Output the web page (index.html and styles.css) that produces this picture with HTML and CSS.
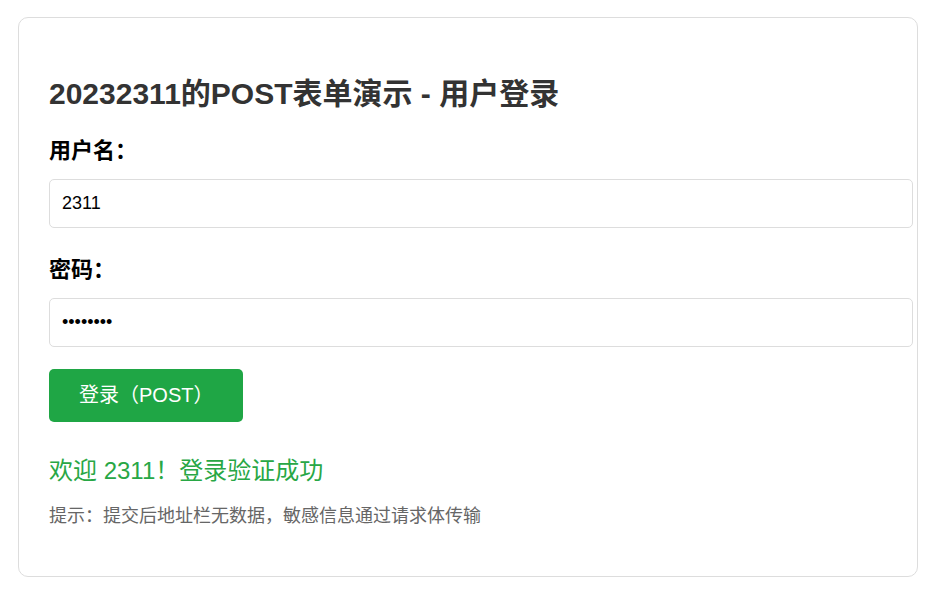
FILE: index.html
```html
<!DOCTYPE html>
<html lang="zh-CN">
<head>
<meta charset="utf-8">
<title>POST表单演示</title>
<link rel="stylesheet" href="styles.css">
</head>
<body>
<div class="card">
  <h2 class="title">20232311的POST表单演示 - 用户登录</h2>
  <form class="form" onsubmit="return false;">
    <div class="group">
      <label class="label" for="u">用户名：</label>
      <input class="input" id="u" type="text" value="2311">
    </div>
    <div class="group">
      <label class="label" for="p">密码：</label>
      <input class="input" id="p" type="password" value="12345678">
    </div>
    <button class="btn" type="submit">登录（POST）</button>
  </form>
  <p class="success">欢迎 2311！登录验证成功</p>
  <p class="hint">提示：提交后地址栏无数据，敏感信息通过请求体传输</p>
</div>
</body>
</html>
```

FILE: styles.css
```css
html, body {
  margin: 0;
  padding: 0;
  background: #fff;
}
body {
  font-family: "Liberation Sans", Arial, "Noto Sans CJK SC", sans-serif;
  padding: 17px 0 0 18px;
}
.card {
  width: 900px;
  box-sizing: border-box;
  border: 1px solid #ddd;
  border-radius: 10px;
  padding: 30px;
  background: #fff;
}
.title {
  margin: 29px 0 27px;
  font-size: 30px;
  line-height: 34px;
  font-weight: bold;
  color: #333;
}
.group {
  margin-bottom: 29px;
}
.group:last-of-type {
  margin-bottom: 22px;
}
.label {
  display: block;
  font-size: 22px;
  line-height: 25px;
  font-weight: bold;
  color: #000;
  margin-bottom: 16px;
}
.input {
  display: block;
  width: 100%;
  box-sizing: content-box;
  margin: 0;
  padding: 13px 12px;
  height: 21px;
  font-family: "Liberation Sans", Arial, "Noto Sans CJK SC", sans-serif;
  font-size: 18px;
  line-height: 21px;
  color: #000;
  border: 1px solid #ddd;
  border-radius: 5px;
  background: #fff;
  outline: none;
}
.btn {
  display: block;
  margin: 0;
  padding: 15px 30px;
  font-family: "Liberation Sans", Arial, "Noto Sans CJK SC", sans-serif;
  font-size: 20px;
  line-height: 23px;
  color: #fff;
  background: #1fa645;
  border: none;
  border-radius: 5px;
  cursor: pointer;
}
.success {
  margin: 35px 0 0;
  font-size: 24px;
  line-height: 27px;
  color: #28a745;
}
.hint {
  margin: 22px 0 19px;
  font-size: 18px;
  line-height: 21px;
  color: #666;
}
```
